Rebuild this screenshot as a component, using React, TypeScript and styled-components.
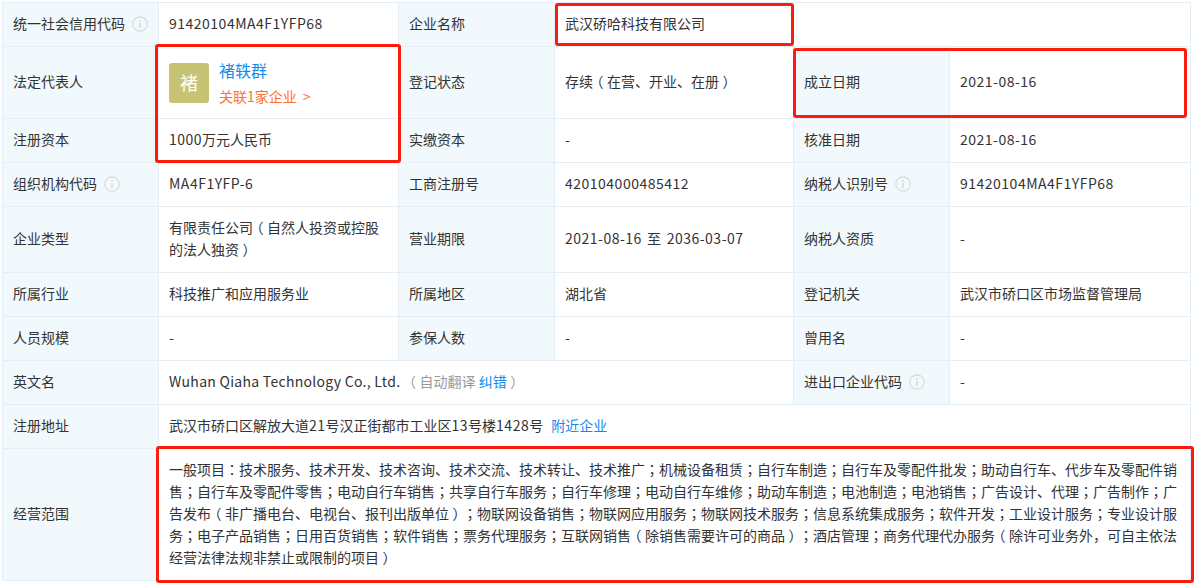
import React from "react";
import styled, { createGlobalStyle } from "styled-components";

const Global = createGlobalStyle`
  html, body { margin: 0; padding: 0; background: #fff; }
  body { font-family: "Noto Sans CJK SC", "Noto Sans", sans-serif; font-size: 14px; color: #333; }
`;

const Page = styled.div`
  position: relative;
  width: 1196px;
  height: 585px;
  padding: 2px 0 0 2px;
  box-sizing: border-box;
  overflow: hidden;
`;

const Table = styled.table`
  width: 1188px;
  table-layout: fixed;
  border-collapse: collapse;
  font-size: 14px;
  line-height: 22px;
  text-spacing-trim: space-all;
  td { border: 1px solid #e4eef6; padding: 8px 10px 12px; vertical-align: middle; box-sizing: border-box; }
`;

const Row = styled.tr<{ $h: number }>`
  height: ${(p) => p.$h}px;
`;

const Label = styled.td`
  background: #f2f9fc;
  color: #333;
`;

const Value = styled.td`
  color: #333;
  word-break: break-all;
`;

const PersonCell = styled(Value)`
  && { padding: 10px; }
`;

const Code = styled.span<{ $s?: number }>`
  letter-spacing: ${(p) => p.$s ?? 0.5}px;
`;

const DateRange = styled(Code)`
  word-spacing: 1.5px;
`;

const ColonMark = styled.span`
  font-family: "Noto Sans CJK TC", sans-serif;
`;

const Paren = styled.span`
  font-feature-settings: "halt";
  padding: 0 3.5px;
`;

const ProseLine = styled.span`
  display: block;
  white-space: nowrap;
`;

const Prose = ({ text }: { text: string }) => (
  <>
    {text.split(/([：；（）])/).map((part, i) => {
      if (part === "：" || part === "；") return <ColonMark key={i}>{part}</ColonMark>;
      if (part === "（" || part === "）") return <Paren key={i}>{part}</Paren>;
      return <React.Fragment key={i}>{part}</React.Fragment>;
    })}
  </>
);

const Info = styled.svg`
  width: 16px;
  height: 16px;
  margin-left: 7px;
  vertical-align: -3px;
`;

const InfoIcon = () => (
  <Info viewBox="0 0 16 16">
    <circle cx="8" cy="8" r="7.2" fill="none" stroke="#d9d9d9" strokeWidth="1.2" />
    <rect x="7.2" y="7" width="1.6" height="5" fill="#d9d9d9" />
    <rect x="7.2" y="4" width="1.6" height="1.7" fill="#d9d9d9" />
  </Info>
);

const Person = styled.div`
  display: flex;
  align-items: center;
  gap: 10px;
`;

const Avatar = styled.div`
  width: 40px;
  height: 40px;
  border-radius: 3px;
  background: #c6c375;
  color: #fff;
  font-size: 18px;
  line-height: 38px;
  text-align: center;
`;

const PersonText = styled.div`
  display: flex;
  flex-direction: column;
  gap: 4px;
`;

const Name = styled.span`
  color: #128bed;
  font-size: 16px;
  line-height: 22px;
`;

const Related = styled.span`
  color: #ff722d;
  font-size: 14px;
  line-height: 22px;
`;

const Chevron = styled.span`
  margin-left: 6px;
`;

const Muted = styled.span`
  color: #999;
  margin-left: 2px;
`;

const LinkText = styled.span`
  color: #128bed;
`;

const AddressLink = styled(LinkText)`
  margin-left: 8px;
`;

const Mark = styled.div<{ $x: number; $y: number; $w: number; $h: number }>`
  position: absolute;
  left: ${(p) => p.$x}px;
  top: ${(p) => p.$y}px;
  width: ${(p) => p.$w}px;
  height: ${(p) => p.$h}px;
  border: 3px solid #fb1c10;
  border-radius: 3px;
  box-sizing: border-box;
  pointer-events: none;
`;

const scopeLines = [
  "一般项目：技术服务、技术开发、技术咨询、技术交流、技术转让、技术推广；机械设备租赁；自行车制造；自行车及零配件批发；助动自行车、代步车及零配件销",
  "售；自行车及零配件零售；电动自行车销售；共享自行车服务；自行车修理；电动自行车维修；助动车制造；电池制造；电池销售；广告设计、代理；广告制作；广",
  "告发布（非广播电台、电视台、报刊出版单位）；物联网设备销售；物联网应用服务；物联网技术服务；信息系统集成服务；软件开发；工业设计服务；专业设计服",
  "务；电子产品销售；日用百货销售；软件销售；票务代理服务；互联网销售（除销售需要许可的商品）；酒店管理；商务代理代办服务（除许可业务外，可自主依法",
  "经营法律法规非禁止或限制的项目）",
];

export default function App() {
  return (
    <Page>
      <Global />
      <Table>
        <colgroup>
          <col style={{ width: 156 }} />
          <col style={{ width: 240 }} />
          <col style={{ width: 156 }} />
          <col style={{ width: 239 }} />
          <col style={{ width: 156 }} />
          <col style={{ width: 241 }} />
        </colgroup>
        <tbody>
          <Row $h={44}>
            <Label>统一社会信用代码<InfoIcon /></Label>
            <Value><Code>91420104MA4F1YFP68</Code></Value>
            <Label>企业名称</Label>
            <Value colSpan={3}>武汉硚哈科技有限公司</Value>
          </Row>
          <Row $h={72}>
            <Label>法定代表人</Label>
            <PersonCell>
              <Person>
                <Avatar>褚</Avatar>
                <PersonText>
                  <Name>褚轶群</Name>
                  <Related>关联1家企业<Chevron>&gt;</Chevron></Related>
                </PersonText>
              </Person>
            </PersonCell>
            <Label>登记状态</Label>
            <Value><Prose text="存续（在营、开业、在册）" /></Value>
            <Label>成立日期</Label>
            <Value><Code>2021-08-16</Code></Value>
          </Row>
          <Row $h={44}>
            <Label>注册资本</Label>
            <Value><Code>1000</Code>万元人民币</Value>
            <Label>实缴资本</Label>
            <Value>-</Value>
            <Label>核准日期</Label>
            <Value><Code>2021-08-16</Code></Value>
          </Row>
          <Row $h={44}>
            <Label>组织机构代码<InfoIcon /></Label>
            <Value><Code>MA4F1YFP-6</Code></Value>
            <Label>工商注册号</Label>
            <Value><Code>420104000485412</Code></Value>
            <Label>纳税人识别号<InfoIcon /></Label>
            <Value><Code>91420104MA4F1YFP68</Code></Value>
          </Row>
          <Row $h={66}>
            <Label>企业类型</Label>
            <Value>
              <ProseLine><Prose text="有限责任公司（自然人投资或控股" /></ProseLine>
              <ProseLine><Prose text="的法人独资）" /></ProseLine>
            </Value>
            <Label>营业期限</Label>
            <Value><DateRange>2021-08-16 至 2036-03-07</DateRange></Value>
            <Label>纳税人资质</Label>
            <Value>-</Value>
          </Row>
          <Row $h={44}>
            <Label>所属行业</Label>
            <Value>科技推广和应用服务业</Value>
            <Label>所属地区</Label>
            <Value>湖北省</Value>
            <Label>登记机关</Label>
            <Value>武汉市硚口区市场监督管理局</Value>
          </Row>
          <Row $h={44}>
            <Label>人员规模</Label>
            <Value>-</Value>
            <Label>参保人数</Label>
            <Value>-</Value>
            <Label>曾用名</Label>
            <Value>-</Value>
          </Row>
          <Row $h={44}>
            <Label>英文名</Label>
            <Value colSpan={3}>
              <Code $s={0.28}>Wuhan Qiaha Technology Co., Ltd.</Code>{" "}
              <Muted><Paren>（</Paren>自动翻译 <LinkText>纠错</LinkText><Paren>）</Paren></Muted>
            </Value>
            <Label>进出口企业代码<InfoIcon /></Label>
            <Value>-</Value>
          </Row>
          <Row $h={44}>
            <Label>注册地址</Label>
            <Value colSpan={5}>
              武汉市硚口区解放大道<Code>21</Code>号汉正街都市工业区<Code>13</Code>号楼<Code>1428</Code>号<AddressLink>附近企业</AddressLink>
            </Value>
          </Row>
          <Row $h={132}>
            <Label>经营范围</Label>
            <Value colSpan={5}>
              {scopeLines.map((line) => (
                <ProseLine key={line}><Prose text={line} /></ProseLine>
              ))}
            </Value>
          </Row>
        </tbody>
      </Table>
      <Mark $x={555} $y={3} $w={239} $h={43} />
      <Mark $x={155} $y={44} $w={246} $h={119} />
      <Mark $x={793} $y={48} $w={394} $h={70} />
      <Mark $x={156} $y={446} $w={1038} $h={137} />
    </Page>
  );
}
